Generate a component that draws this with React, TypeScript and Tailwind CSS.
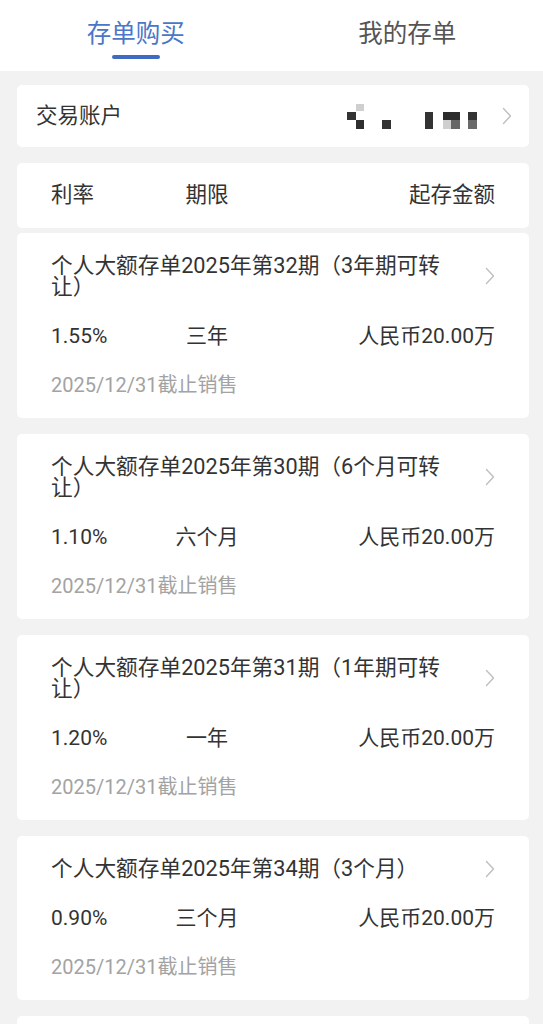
import React, { useState } from 'react';

interface Product {
    title: string;
    rate: string;
    term: string;
    amount: string;
    deadline: string;
}

const products: Product[] = [
    { title: '个人大额存单2025年第32期（3年期可转让）', rate: '1.55%', term: '三年', amount: '人民币20.00万', deadline: '2025/12/31截止销售' },
    { title: '个人大额存单2025年第30期（6个月可转让）', rate: '1.10%', term: '六个月', amount: '人民币20.00万', deadline: '2025/12/31截止销售' },
    { title: '个人大额存单2025年第31期（1年期可转让）', rate: '1.20%', term: '一年', amount: '人民币20.00万', deadline: '2025/12/31截止销售' },
    { title: '个人大额存单2025年第34期（3个月）', rate: '0.90%', term: '三个月', amount: '人民币20.00万', deadline: '2025/12/31截止销售' },
    { title: '个人大额存单2025年第33期（2年期可转让）', rate: '1.20%', term: '两年', amount: '人民币20.00万', deadline: '2025/12/31截止销售' },
];

const Chevron = () => (
    <svg width="10" height="18" viewBox="0 0 10 18" fill="none" className="shrink-0">
        <path d="M1.5 1.5 L8.5 9 L1.5 16.5" stroke="#bdbdbd" strokeWidth="1.3" strokeLinecap="round" strokeLinejoin="round" />
    </svg>
);

// masked account number (pixelated in the screenshot)
const MaskedAccount = () => (
    <svg width="130" height="25" viewBox="0 0 130 25">
        <rect x="9" y="0" width="8" height="7" fill="#cfcfcf" />
        <rect x="0" y="8" width="9" height="8" fill="#333" />
        <rect x="9" y="16" width="8" height="9" fill="#2e2e2e" />
        <rect x="35" y="16" width="9" height="9" fill="#333" />
        <rect x="78" y="8" width="8" height="17" fill="#333" />
        <rect x="96" y="8" width="17" height="8" fill="#2c2c2c" />
        <rect x="96" y="16" width="8" height="9" fill="#cfcfcf" />
        <rect x="104" y="16" width="9" height="9" fill="#666" />
        <rect x="121" y="8" width="9" height="8" fill="#333" />
        <rect x="121" y="16" width="9" height="9" fill="#6a6a6a" />
    </svg>
);

const ProductCard = ({ p }: { p: Product }) => (
    <div className="bg-white rounded-[5px] pt-[22px] pb-[22px] px-[34px]">
        <div className="flex items-center justify-between">
            <div className="w-[410px] text-[21.7px] leading-[21px] text-[#333]">{p.title}</div>
            <Chevron />
        </div>
        <div className="flex items-center mt-[28px] text-[21px] leading-[22px] text-[#333]">
            <div className="w-[103px]">{p.rate}</div>
            <div className="w-[106px] text-center">{p.term}</div>
            <div className="flex-1 text-right">{p.amount}</div>
        </div>
        <div className="mt-[27px] text-[20px] leading-[22px] text-[#a3a3a3]">{p.deadline}</div>
    </div>
);

export default function App() {
    const [tab, setTab] = useState(0);

    return (
        <div className="min-h-screen bg-[#f2f2f2]" style={{ fontFamily: 'Roboto, "Noto Sans CJK SC", sans-serif' }}>
            {/* Tabs */}
            <div className="bg-white h-[71px] flex">
                {['存单购买', '我的存单'].map((t, i) => (
                    <button
                        key={t}
                        onClick={() => setTab(i)}
                        className="flex-1 flex flex-col items-center pt-[17px]"
                    >
                        <span className={`text-[24.5px] leading-[34px] ${tab === i ? 'text-[#4a77c7]' : 'text-[#555]'}`}>{t}</span>
                        {tab === i && <span className="mt-[4px] w-[48px] h-[4px] rounded-full bg-[#3f6bc2]" />}
                    </button>
                ))}
            </div>

            <div className="pl-[17px] pr-[14px] pt-[14px] pb-4 flex flex-col">
                {/* Account */}
                <div className="bg-white rounded-[5px] h-[62px] flex items-center pl-[19px] pr-[17px]">
                    <span className="text-[21.5px] text-[#333]">交易账户</span>
                    <div className="ml-auto flex items-center gap-[25px]">
                        <MaskedAccount />
                        <Chevron />
                    </div>
                </div>

                {/* Column header */}
                <div className="mt-[16px] bg-white rounded-[5px] h-[65px] flex items-center px-[34px] text-[21.5px] text-[#333]">
                    <div className="w-[103px]">利率</div>
                    <div className="w-[106px] text-center">期限</div>
                    <div className="flex-1 text-right">起存金额</div>
                </div>

                <div className="mt-[5px] flex flex-col gap-[16px]">
                    {products.map((p) => (
                        <ProductCard key={p.title} p={p} />
                    ))}
                </div>
            </div>
        </div>
    );
}
